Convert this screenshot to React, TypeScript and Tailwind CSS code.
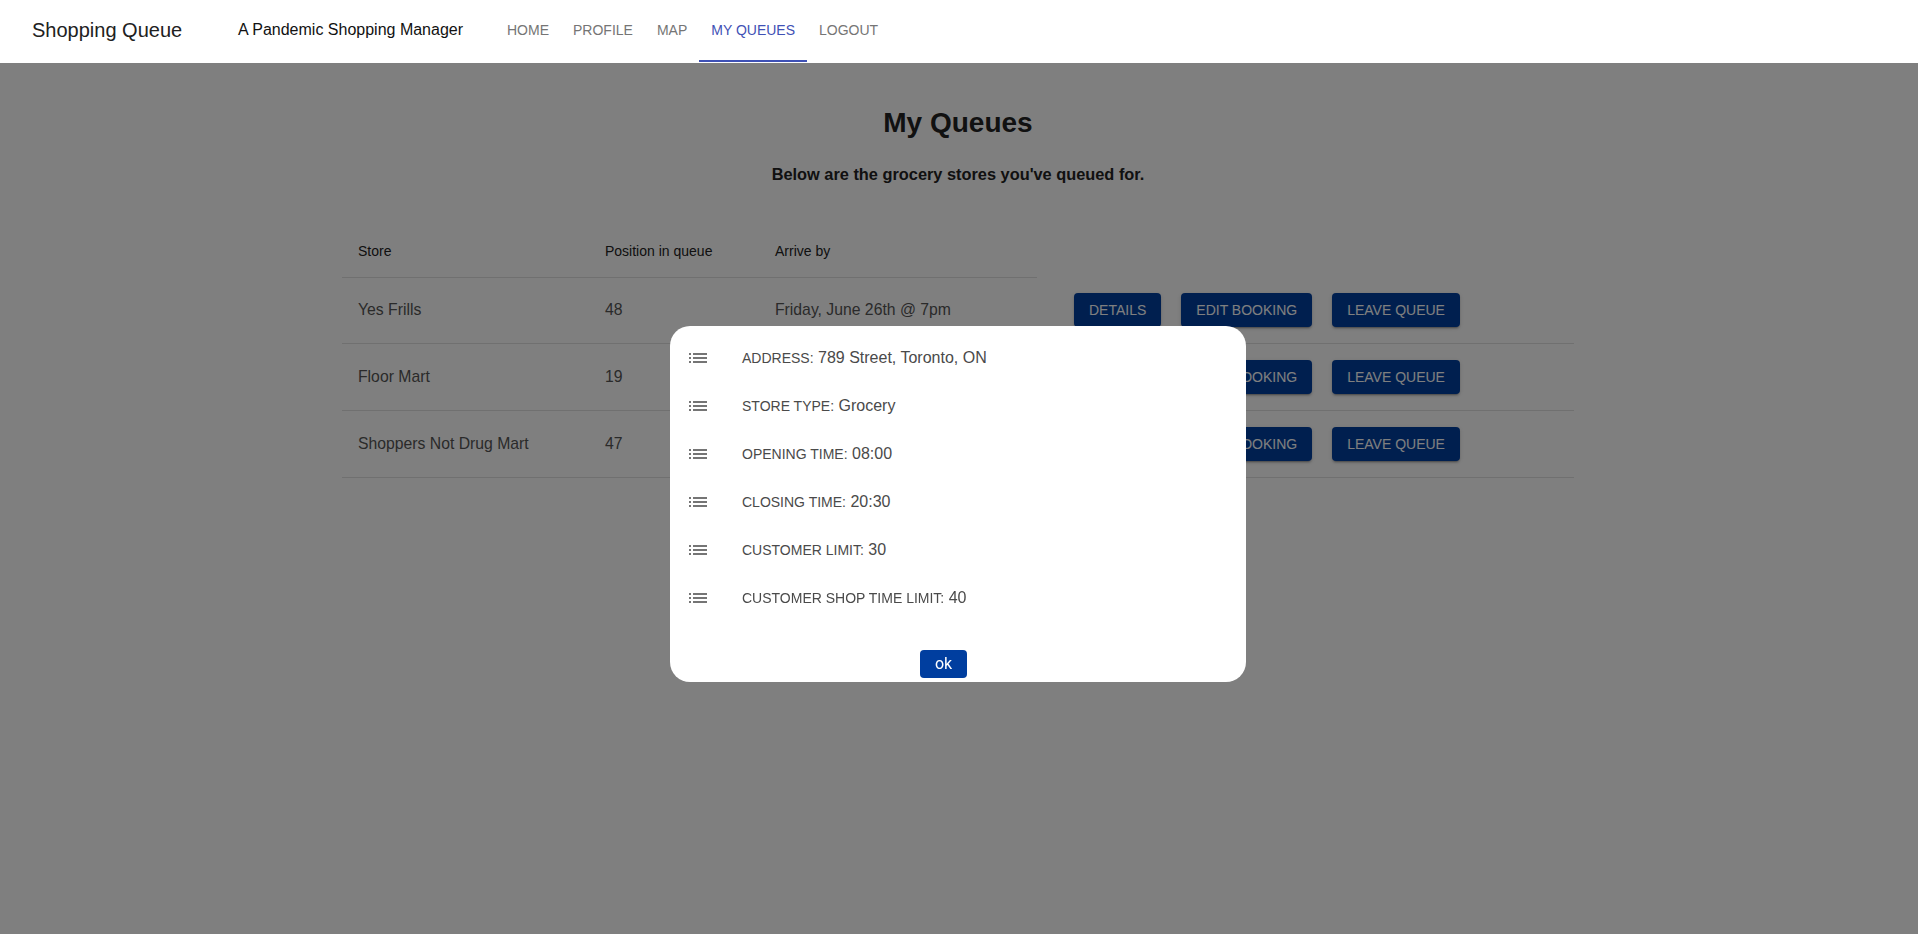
const tabs = ['Home', 'Profile', 'Map', 'My Queues', 'Logout'];
const rows = [
  { store: 'Yes Frills', pos: '48', arrive: 'Friday, June 26th @ 7pm', height: 'h-[66px]' },
  { store: 'Floor Mart', pos: '19', arrive: '', height: 'h-[67px]' },
  { store: 'Shoppers Not Drug Mart', pos: '47', arrive: '', height: 'h-[67px]' },
];
const details = [
  ['Address:', '789 Street, Toronto, ON'],
  ['Store type:', 'Grocery'],
  ['Opening time:', '08:00'],
  ['Closing time:', '20:30'],
  ['Customer limit:', '30'],
  ['Customer shop time limit:', '40'],
];

function ActionButton({ label }: { label: string }) {
  return (
    <button className="mx-[10px] h-[34px] rounded bg-[#003e9f] px-[15px] text-sm uppercase leading-[34px] text-white shadow-[0_3px_1px_-2px_rgba(0,0,0,0.2),0_2px_2px_0_rgba(0,0,0,0.14),0_1px_5px_0_rgba(0,0,0,0.12)]">
      {label}
    </button>
  );
}

function ListIcon() {
  return (
    <svg viewBox="0 0 24 24" className="h-6 w-6 fill-[#757575]">
      <path d="M3 13h2v-2H3v2zm0 4h2v-2H3v2zm0-8h2V7H3v2zm4 4h14v-2H7v2zm0 4h14v-2H7v2zM7 7v2h14V7H7z" />
    </svg>
  );
}

export default function App() {
  return (
    <div className="min-h-[934px] bg-white font-['Liberation_Sans',Arial,sans-serif] text-black">
      <header className="flex h-[63px] items-start bg-white pl-8">
        <div className="w-[206px] text-xl leading-[60px] text-[#212121]">Shopping Queue</div>
        <div className="w-[257px] text-base leading-[60px] text-[#111]">A Pandemic Shopping Manager</div>
        <nav className="flex h-[62px]">
          {tabs.map((t) => {
            const active = t === 'My Queues';
            return (
              <div
                key={t}
                className={`relative h-[62px] px-3 text-sm uppercase leading-[60px] ${active ? 'text-[#3f51b5]' : 'text-[#757575]'}`}
              >
                {t}
                {active && <span className="absolute inset-x-0 bottom-0 h-0.5 bg-[#3f51b5]" />}
              </div>
            );
          })}
        </nav>
      </header>

      <main className="pr-[2px] pt-[40px] text-center">
        <h1 className="text-[28px] font-bold leading-[40px] text-[#222]">My Queues</h1>
        <p className="mt-[21px] text-[16.35px] font-bold leading-5 text-[#222]">Below are the grocery stores you've queued for.</p>
        <table className="ml-[342px] mt-[41px] w-[1232px] table-fixed border-collapse text-left">
          <colgroup>
            <col className="w-[247px]" />
            <col className="w-[170px]" />
            <col className="w-[278px]" />
            <col />
          </colgroup>
          <thead>
            <tr>
              {['Store', 'Position in queue', 'Arrive by'].map((h) => (
                <th key={h} className="h-[52px] border-b border-[#e0e0e0] px-4 text-sm font-normal text-[#222]">
                  {h}
                </th>
              ))}
              <th />
            </tr>
          </thead>
          <tbody className="text-[15.75px] text-[#555]">
            {rows.map((r) => (
              <tr key={r.store} className={`${r.height} border-b border-[#e0e0e0]`}>
                <td className="px-4">{r.store}</td>
                <td className="px-4">{r.pos}</td>
                <td className="px-4">{r.arrive}</td>
                <td className="pl-[27px] pr-4 whitespace-nowrap">
                  <ActionButton label="Details" />
                  <ActionButton label="Edit Booking" />
                  <ActionButton label="Leave Queue" />
                </td>
              </tr>
            ))}
          </tbody>
        </table>
      </main>

      <div className="fixed inset-x-0 bottom-0 top-[63px] flex justify-center bg-black/50 pr-[2px] pt-[263px]">
        <div className="h-[356px] w-[576px] rounded-[20px] bg-white">
          <ul className="py-2">
            {details.map(([k, v]) => (
              <li key={k} className="flex h-12 items-center px-4">
                <span className="w-14 shrink-0"><ListIcon /></span>
                <span className="text-base text-[#4a4a4a]">
                  <span className="text-sm uppercase">{k}</span> {v}
                </span>
              </li>
            ))}
          </ul>
          <div className="mt-[20px] flex justify-center pr-[29px]">
            <button className="h-7 w-[47px] rounded bg-[#003e9f] font-['Roboto',sans-serif] text-base text-white">ok</button>
          </div>
        </div>
      </div>
    </div>
  );
}
